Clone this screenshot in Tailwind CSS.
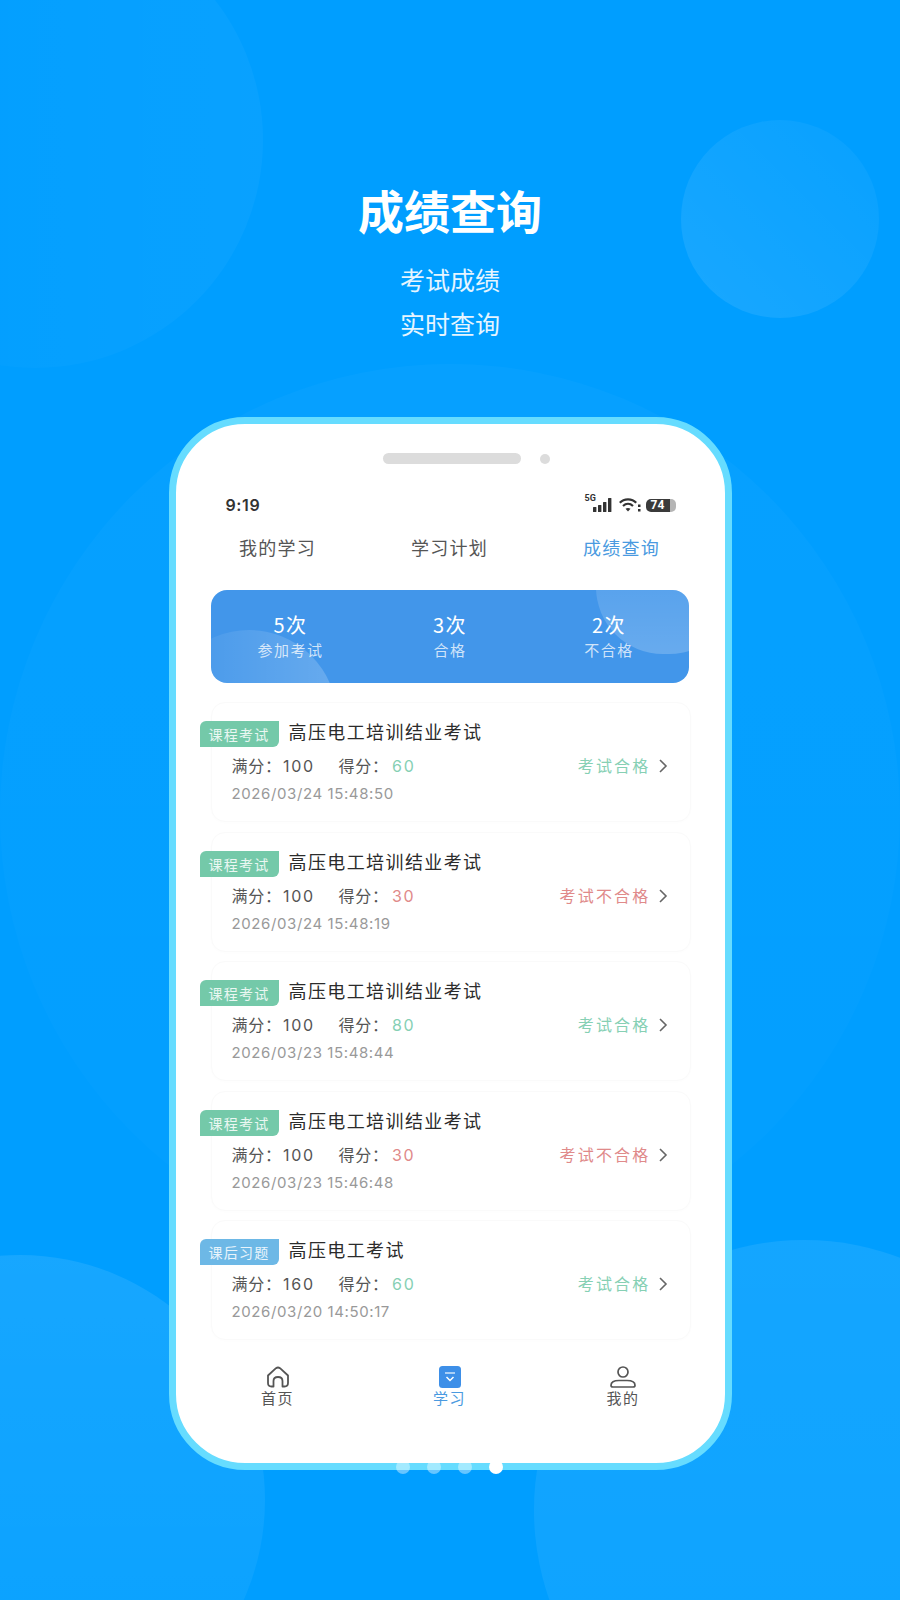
<!DOCTYPE html>
<html lang="zh-CN">

<head>
    <meta charset="UTF-8">
    <meta name="viewport" content="width=device-width, initial-scale=1.0">
    <title>成绩查询</title>
    <script src="https://cdn.jsdelivr.net/npm/@tailwindcss/browser@4"></script>
</head>

<body>
    <div class="relative w-[900px] h-[1600px] overflow-hidden bg-[#009eff] font-['Noto_Sans_CJK_SC','Noto_Sans',sans-serif]">
        <!-- background circles -->
        <div class="absolute left-[-193px] top-[-88px] w-[456px] h-[456px] rounded-full bg-gradient-to-r from-white/0 to-white/[0.035]"></div>
        <div class="absolute left-[681px] top-[120px] w-[198px] h-[198px] rounded-full bg-gradient-to-bl from-white/[0.03] to-white/[0.10]"></div>
        <div class="absolute left-[0px] top-[364px] w-[900px] h-[900px] rounded-full bg-gradient-to-b from-white/[0.025] to-white/[0.01]"></div>
        <div class="absolute left-[-225px] top-[1255px] w-[490px] h-[490px] rounded-full bg-gradient-to-b from-white/[0.09] to-white/[0.03]"></div>
        <div class="absolute left-[534px] top-[1240px] w-[540px] h-[540px] rounded-full bg-gradient-to-b from-white/[0.08] to-white/[0.05]"></div>

        <div class="relative flex flex-col items-center">
            <h1 class="mt-[180px] text-[46px] leading-[58px] font-bold text-white">成绩查询</h1>
            <p class="mt-[19px] text-[25px] leading-[44px] text-white/90">考试成绩</p>
            <p class="text-[25px] leading-[44px] text-white/90">实时查询</p>

            <!-- phone -->
            <div class="relative mt-[72px] w-[563px] h-[1053px] rounded-[76px] border-[7px] border-[#66dcff] bg-white">
                <div class="flex items-center justify-center gap-[19px] pt-[29px] pl-[33px]">
                    <div class="w-[138px] h-[11px] rounded-full bg-[#dcdcdc]"></div>
                    <div class="w-[10px] h-[10px] rounded-full bg-[#dcdcdc]"></div>
                </div>

                <div class="flex items-center justify-between pl-[50px] pr-[49px] mt-[31px] h-[20px]">
                    <span class="text-[16px] font-semibold text-[#333] font-['Inter',sans-serif] tracking-[0.6px]">9:19</span>
                    <div class="flex items-center">
                        <div class="relative w-[28px] h-[16px]">
                            <span class="absolute left-0 top-[-4px] text-[9px] leading-[10px] font-bold text-[#333] font-['Roboto',sans-serif]">5G</span>
                            <svg class="absolute left-[8px] top-0" width="20" height="16" viewBox="0 0 20 16" fill="#333">
                                <rect x="0" y="10" width="3.4" height="5" rx="0.5" />
                                <rect x="5" y="8" width="3.4" height="7" rx="0.5" />
                                <rect x="10" y="5" width="3.4" height="10" rx="0.5" />
                                <rect x="15" y="1" width="3.4" height="14" rx="0.5" />
                            </svg>
                        </div>
                        <svg class="ml-[6px]" width="22" height="14" viewBox="0 0 22 14" fill="none" stroke="#333" stroke-width="2.2">
                            <path d="M0.8 4.8 C5 0.2 13 0.2 17.2 4.8" />
                            <path d="M4 8 C7 5.2 11 5.2 14 8" />
                            <path d="M6.5 10.8 L9 13.5 L11.5 10.8 C10 9.6 8 9.6 6.5 10.8Z" fill="#333" stroke="none" />
                            <rect x="19" y="6.5" width="2.5" height="2.5" fill="#333" stroke="none" />
                            <rect x="19" y="11" width="2.5" height="2.5" fill="#333" stroke="none" />
                        </svg>
                        <div class="ml-[5px] flex items-center">
                            <div class="flex w-[24px] h-[13px] rounded-l-[5px] bg-[#3a3a3a] items-center justify-center text-[12px] leading-[13px] font-bold text-white font-['Roboto',sans-serif]">74</div>
                            <div class="w-[6px] h-[13px] rounded-r-[5px] bg-[#b5b5b5]"></div>
                        </div>
                    </div>
                </div>

                <div class="grid grid-cols-3 px-[16px] mt-[20px] pr-[17px] text-center text-[18px] leading-[24px] tracking-[1.2px] text-[#555]">
                    <span>我的学习</span>
                    <span>学习计划</span>
                    <span class="text-[#4a9ae0]">成绩查询</span>
                </div>

                <!-- summary -->
                <div class="relative ml-[35px] mt-[31px] w-[478px] h-[93px] rounded-[16px] bg-[#4296ea] overflow-hidden">
                    <div class="absolute left-[-50px] top-[40px] w-[176px] h-[176px] rounded-full bg-gradient-to-r from-white/0 to-white/20"></div>
                    <div class="absolute left-[385px] top-[-70px] w-[140px] h-[134px] rounded-full bg-gradient-to-b from-white/[0.04] to-white/20"></div>
                    <div class="relative flex pt-[19px] text-white text-center">
                        <div class="w-[160px]">
                            <div class="text-[20px] leading-[32px] tracking-[1.5px]">5次</div>
                            <div class="text-[15px] leading-[18px] tracking-[1.5px] text-white/75">参加考试</div>
                        </div>
                        <div class="w-[159px]">
                            <div class="text-[20px] leading-[32px] tracking-[1.5px]">3次</div>
                            <div class="text-[15px] leading-[18px] tracking-[1.5px] text-white/75">合格</div>
                        </div>
                        <div class="w-[159px]">
                            <div class="text-[20px] leading-[32px] tracking-[1.5px]">2次</div>
                            <div class="text-[15px] leading-[18px] tracking-[1.5px] text-white/75">不合格</div>
                        </div>
                    </div>
                </div>

                <div id="list" class="flex flex-col gap-[9.5px] mt-[19px] ml-[35px] w-[480px]"></div>

                <!-- bottom nav -->
                <div class="grid grid-cols-3 px-[16px] pr-[17px] mt-[26px] text-center text-[15px] leading-[18px] tracking-[1.5px] text-[#555]">
                    <div class="flex flex-col items-center">
                        <svg width="24" height="22" viewBox="0 0 24 22" fill="none" stroke="#555" stroke-width="1.8" stroke-linejoin="round">
                            <path d="M2 9.5 L10 2.2 Q12 0.8 14 2.2 L22 9.5 V17 Q22 20.5 18.5 20.5 H16.5 V15 Q16.5 11 12 11 Q7.5 11 7.5 15 V20.5 H5.5 Q2 20.5 2 17Z" />
                        </svg>
                        <span class="mt-[1px]">首页</span>
                    </div>
                    <div class="flex flex-col items-center text-[#4a9ae0]">
                        <svg width="22" height="22" viewBox="0 0 22 22" fill="none">
                            <rect width="22" height="22" rx="3.5" fill="#3d8fe8" />
                            <path d="M6 7 H16" stroke="#cfe4fb" stroke-width="1.5" />
                            <path d="M7.5 11 L11 14.5 L14.5 11" stroke="#fff" stroke-width="1.5" />
                        </svg>
                        <span class="mt-[1px]">学习</span>
                    </div>
                    <div class="flex flex-col items-center pl-[3px]">
                        <svg width="26" height="22" viewBox="0 0 26 22" fill="none" stroke="#555" stroke-width="1.7">
                            <circle cx="13" cy="6" r="5" />
                            <path d="M3 21 H23 Q25 21 25 19.2 Q25 14.5 17 14.5 H9 Q1 14.5 1 19.2 Q1 21 3 21Z" />
                        </svg>
                        <span class="mt-[1px]">我的</span>
                    </div>
                </div>
            </div>

            <!-- pager -->
            <div class="absolute left-[396px] top-[1460px] flex gap-[17px]">
                <div class="w-[14px] h-[14px] rounded-full bg-white/40"></div>
                <div class="w-[14px] h-[14px] rounded-full bg-white/40"></div>
                <div class="w-[14px] h-[14px] rounded-full bg-white/40"></div>
                <div class="w-[14px] h-[14px] rounded-full bg-white"></div>
            </div>
        </div>
    </div>
</body>
<script>
    let list = document.querySelector("#list");

    let exams = [
        { tag: "课程考试", tagCls: "bg-[#74c9a9]", title: "高压电工培训结业考试", full: 100, score: 60, pass: true, time: "2026/03/24 15:48:50" },
        { tag: "课程考试", tagCls: "bg-[#74c9a9]", title: "高压电工培训结业考试", full: 100, score: 30, pass: false, time: "2026/03/24 15:48:19" },
        { tag: "课程考试", tagCls: "bg-[#74c9a9]", title: "高压电工培训结业考试", full: 100, score: 80, pass: true, time: "2026/03/23 15:48:44" },
        { tag: "课程考试", tagCls: "bg-[#74c9a9]", title: "高压电工培训结业考试", full: 100, score: 30, pass: false, time: "2026/03/23 15:46:48" },
        { tag: "课后习题", tagCls: "bg-[#6db8e6]", title: "高压电工考试", full: 160, score: 60, pass: true, time: "2026/03/20 14:50:17" },
    ];

    exams.forEach(v => {
        let color = v.pass ? "text-[#86d0b4]" : "text-[#e08a8a]";
        list.innerHTML += `
        <div class="h-[120px] rounded-[14px] border border-[#fafafa] shadow-[0_1px_3px_rgba(0,0,0,0.01)]">
            <div class="flex items-center -ml-[12px] mt-[18px]">
                <span class="w-[79px] h-[26px] rounded-tl-[6px] rounded-br-[6px] ${v.tagCls} text-white/85 text-[14px] leading-[26px] text-center tracking-[1.2px]">${v.tag}</span>
                <span class="ml-[10px] -mt-[6px] text-[18px] leading-[26px] tracking-[1.4px] text-[#2b2b2b]">${v.title}</span>
            </div>
            <div class="flex items-center ml-[20px] mt-[6px] h-[26px] text-[16px] text-[#555] tracking-[0.8px] font-['Inter','Noto_Sans_CJK_SC',sans-serif]">
                <span class="w-[107px]">满分：<span class="ml-[1px] tracking-[1.8px]">${v.full}</span></span>
                <span>得分：</span><span class="ml-[3px] tracking-[1.8px] ${color}">${v.score}</span>
                <span class="ml-auto tracking-[2.2px] ${color}">${v.pass ? "考试合格" : "考试不合格"}</span>
                <svg class="ml-[7px] mr-[22px]" width="10" height="16" viewBox="0 0 10 16" fill="none" stroke="#666" stroke-width="1.6"><path d="M2 2 L8 8 L2 14" /></svg>
            </div>
            <div class="ml-[20px] mt-[5px] text-[15px] leading-[20px] tracking-[0.6px] text-[#999] font-['Inter','Noto_Sans_CJK_SC',sans-serif]">${v.time}</div>
        </div>`;
    });
</script>

</html>
